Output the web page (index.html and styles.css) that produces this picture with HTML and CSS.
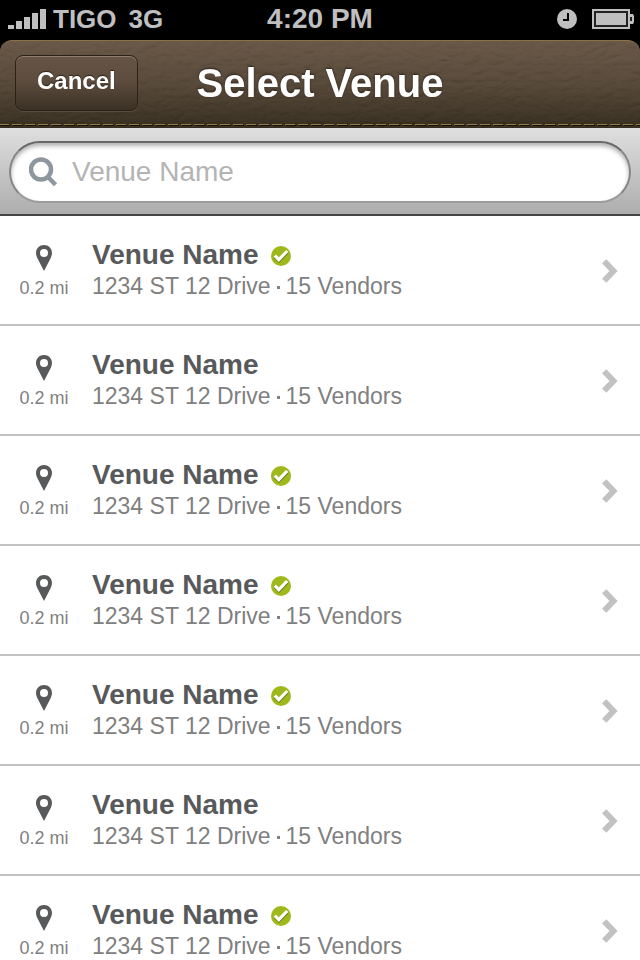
FILE: index.html
```html
<!DOCTYPE html>
<html lang="en">
<head>
<meta charset="utf-8">
<meta name="viewport" content="width=device-width, initial-scale=1">
<title>Select Venue</title>
<link rel="stylesheet" href="styles.css">
</head>
<body>
<svg class="defs" aria-hidden="true">
  <symbol id="pin" viewBox="0 0 16 26">
    <path fill-rule="evenodd" d="M8 0C3.500 0 0 3.500 0 8c0 2.200.8 4 1.800 6L8 26l6.200-12C15.200 12 16 10.200 16 8c0-4.500-3.500-8-8-8zM8 3.900a4 4 0 1 1 0 8a4 4 0 0 1 0-8z"/>
  </symbol>
  <symbol id="check" viewBox="0 0 20 20">
    <circle cx="10" cy="10" r="10" fill="#9fb81c"/>
    <path d="M3.800 10.800l4.200 4 8.500-8.600" fill="none" stroke="#66761c" stroke-width="3"/>
    <path d="M3.800 9.600l4 4 8.400-8.600" fill="none" stroke="#fff" stroke-width="3.200"/>
  </symbol>
  <symbol id="chevron" viewBox="0 0 16 24">
    <path d="M2.200 2.200L11.500 12l-9.300 9.800" fill="none" stroke="#c2c2c2" stroke-width="6"/>
  </symbol>
</svg>
<div class="app">
  <div class="status">
    <div class="carrier">
      <svg width="39" height="20" viewBox="0 0 39 20" fill="#bfbfbf" aria-hidden="true">
        <path d="M0 16h6v4H0zM8 12h6v8H8zM16 8h6v12h-6zM24 4h6v16h-6zM32 0h6v20h-6z"/>
      </svg>
      <span>TIGO</span><span class="network">3G</span>
    </div>
    <time class="clock">4:20 PM</time>
    <div class="indicators">
      <svg width="20" height="20" viewBox="0 0 20 20" role="img" aria-label="Alarm">
        <circle cx="10" cy="10" r="10" fill="#bfbfbf"/>
        <path d="M11 4v7H6" fill="none" stroke="#000" stroke-width="2"/>
      </svg>
      <svg width="43" height="20" viewBox="0 0 43 20" role="img" aria-label="Battery">
        <path fill="#bfbfbf" d="M0 0h38v5h3l1 2v6l-1 2h-3v5H0z"/>
        <path fill="#222" d="M2 2h34v16H2zM38 8h2v4h-2z"/>
        <path fill="#bfbfbf" d="M4 4h30v12H4z"/>
      </svg>
    </div>
  </div>
  <header class="bar">
    <svg class="leather" aria-hidden="true">
      <filter id="grain" x="0" y="0" width="100%" height="100%">
        <feTurbulence type="turbulence" baseFrequency="0.06 0.12" numOctaves="2" seed="8" result="n"/>
        <feDiffuseLighting in="n" lighting-color="#fff" surfaceScale="2" diffuseConstant="0.7">
          <feDistantLight azimuth="250" elevation="45"/>
        </feDiffuseLighting>
      </filter>
      <rect width="100%" height="100%" filter="url(#grain)"/>
    </svg>
    <button class="cancel" type="button">Cancel</button>
    <h1>Select Venue</h1>
  </header>
  <form class="search">
    <label class="field">
      <svg width="29" height="30" viewBox="0 0 29 30" fill="none" stroke="#8e969e" aria-hidden="true">
        <circle cx="12" cy="12.500" r="10" stroke-width="4.500"/>
        <path d="M18.500 19.500l8 8.300" stroke-width="4.500"/>
      </svg>
      <input type="search" placeholder="Venue Name" aria-label="Venue Name">
    </label>
  </form>
  <ul class="venues">
    <li><a class="venue" href="#">
      <span class="distance"><svg class="pin"><use href="#pin"/></svg>0.2 mi</span>
      <span class="info"><strong>Venue Name <svg class="check" role="img" aria-label="Verified"><use href="#check"/></svg></strong><span class="detail">1234 ST 12 Drive<i class="dot"></i>15 Vendors</span></span>
      <svg class="chevron"><use href="#chevron"/></svg></a></li>
    <li><a class="venue" href="#">
      <span class="distance"><svg class="pin"><use href="#pin"/></svg>0.2 mi</span>
      <span class="info"><strong>Venue Name</strong><span class="detail">1234 ST 12 Drive<i class="dot"></i>15 Vendors</span></span>
      <svg class="chevron"><use href="#chevron"/></svg></a></li>
    <li><a class="venue" href="#">
      <span class="distance"><svg class="pin"><use href="#pin"/></svg>0.2 mi</span>
      <span class="info"><strong>Venue Name <svg class="check" role="img" aria-label="Verified"><use href="#check"/></svg></strong><span class="detail">1234 ST 12 Drive<i class="dot"></i>15 Vendors</span></span>
      <svg class="chevron"><use href="#chevron"/></svg></a></li>
    <li><a class="venue" href="#">
      <span class="distance"><svg class="pin"><use href="#pin"/></svg>0.2 mi</span>
      <span class="info"><strong>Venue Name <svg class="check" role="img" aria-label="Verified"><use href="#check"/></svg></strong><span class="detail">1234 ST 12 Drive<i class="dot"></i>15 Vendors</span></span>
      <svg class="chevron"><use href="#chevron"/></svg></a></li>
    <li><a class="venue" href="#">
      <span class="distance"><svg class="pin"><use href="#pin"/></svg>0.2 mi</span>
      <span class="info"><strong>Venue Name <svg class="check" role="img" aria-label="Verified"><use href="#check"/></svg></strong><span class="detail">1234 ST 12 Drive<i class="dot"></i>15 Vendors</span></span>
      <svg class="chevron"><use href="#chevron"/></svg></a></li>
    <li><a class="venue" href="#">
      <span class="distance"><svg class="pin"><use href="#pin"/></svg>0.2 mi</span>
      <span class="info"><strong>Venue Name</strong><span class="detail">1234 ST 12 Drive<i class="dot"></i>15 Vendors</span></span>
      <svg class="chevron"><use href="#chevron"/></svg></a></li>
    <li><a class="venue" href="#">
      <span class="distance"><svg class="pin"><use href="#pin"/></svg>0.2 mi</span>
      <span class="info"><strong>Venue Name <svg class="check" role="img" aria-label="Verified"><use href="#check"/></svg></strong><span class="detail">1234 ST 12 Drive<i class="dot"></i>15 Vendors</span></span>
      <svg class="chevron"><use href="#chevron"/></svg></a></li>
  </ul>
</div>
</body>
</html>
```
FILE: styles.css
```css
* {
  box-sizing: border-box;
}

body {
  margin: 0;
  background: #000;
  font-family: "Liberation Sans", Arial, sans-serif;
}

.defs {
  position: absolute;
  width: 0;
  height: 0;
}

.app {
  display: flex;
  flex-direction: column;
  height: 100vh;
}

.status {
  flex: none;
  display: grid;
  grid-template-columns: 1fr auto 1fr;
  align-items: center;
  height: 40px;
  padding: 0 5px 2px;
  color: #bfbfbf;
  font-size: 26px;
  font-weight: bold;
}

.carrier {
  display: flex;
  align-items: center;
  gap: 6px;
  padding-left: 3px;
}

.network {
  margin-left: 6px;
}

.clock {
  font-size: 28px;
}

.indicators {
  display: flex;
  justify-content: flex-end;
  gap: 15px;
}

.bar {
  position: relative;
  flex: none;
  display: grid;
  grid-template-columns: 1fr auto 1fr;
  align-items: center;
  height: 88px;
  padding: 0 15px 4px;
  overflow: hidden;
  border-top: 1px solid #8b7347;
  border-radius: 12px 12px 0 0;
  background: linear-gradient(#655443, #534536 50%, #332a1d);
}

/* stitched seam */
.bar::after {
  content: "";
  position: absolute;
  left: 0;
  right: 0;
  bottom: 2px;
  height: 2px;
  background:
    repeating-linear-gradient(90deg, #947a47 0 9px, transparent 9px 12px, #947a47 12px 13px) 0 0 / 100% 1px no-repeat,
    repeating-linear-gradient(90deg, #17120a 0 10px, transparent 10px 13px) 0 1px / 100% 1px no-repeat;
}

.leather {
  position: absolute;
  inset: 0;
  width: 100%;
  height: 100%;
  opacity: 0.16;
  mix-blend-mode: soft-light;
}

.cancel {
  position: relative;
  justify-self: start;
  height: 56px;
  padding: 0 21px 4px;
  border: 1px solid #2a2118;
  border-radius: 8px;
  background: linear-gradient(#665545, #5d4d3e 45%, #3c3126);
  box-shadow: inset 0 1px 0 #8d8072, 0 1px 0 #5a4c3c;
  color: #fff;
  font: bold 24px "Liberation Sans", Arial, sans-serif;
  text-shadow: 0 -1px 1px #2a2118;
}

h1 {
  position: relative;
  margin: 0;
  color: #fff;
  font-size: 40px;
  line-height: 48px;
  text-shadow: 0 -1px 2px #2a2118;
}

.search {
  flex: none;
  margin: 0;
  padding: 13px 9px 11px;
  border-bottom: 2px solid #434343;
  background: linear-gradient(#dfdfdf, #adadad);
}

.field {
  display: flex;
  align-items: center;
  gap: 14px;
  height: 62px;
  padding: 0 18px;
  border: 2px solid #858585;
  border-color: #686868 #858585 #9c9c9c;
  border-radius: 31px;
  background: #fff;
  box-shadow: inset 0 3px 4px rgba(0, 0, 0, 0.3);
}

.field svg {
  flex: none;
}

.field input {
  flex: 1;
  min-width: 0;
  padding: 0;
  border: 0;
  outline: 0;
  background: none;
  color: #555;
  font: 28px "Liberation Sans", Arial, sans-serif;
}

.field input::placeholder {
  color: #b4b4b4;
}

.venues {
  flex: 1;
  min-height: 0;
  margin: 0;
  padding: 0;
  overflow-y: auto;
  scrollbar-width: none;
  background: #fff;
  list-style: none;
}

.venue {
  display: flex;
  align-items: flex-start;
  height: 110px;
  padding: 22px 22px 0 0;
  border-bottom: 2px solid #c2c2c2;
  color: #808080;
  text-decoration: none;
}

.distance {
  flex: none;
  display: flex;
  flex-direction: column;
  align-items: center;
  gap: 7px;
  width: 88px;
  padding-top: 7px;
  font-size: 18px;
  line-height: 20px;
}

.pin {
  width: 16px;
  height: 26px;
  fill: #58595b;
}

.info {
  flex: 1;
  min-width: 0;
  padding-left: 4px;
}

.info strong {
  display: flex;
  align-items: center;
  gap: 12px;
  color: #58595b;
  font-size: 28px;
  line-height: 34px;
}

.check {
  flex: none;
  width: 20px;
  height: 20px;
  margin-top: 2px;
}

.detail {
  display: flex;
  align-items: center;
  font-size: 23px;
  line-height: 28px;
}

.dot {
  width: 3px;
  height: 3px;
  margin: 3px 6px 0;
  background: #808080;
}

.chevron {
  flex: none;
  width: 16px;
  height: 24px;
  margin-top: 21px;
}
```
